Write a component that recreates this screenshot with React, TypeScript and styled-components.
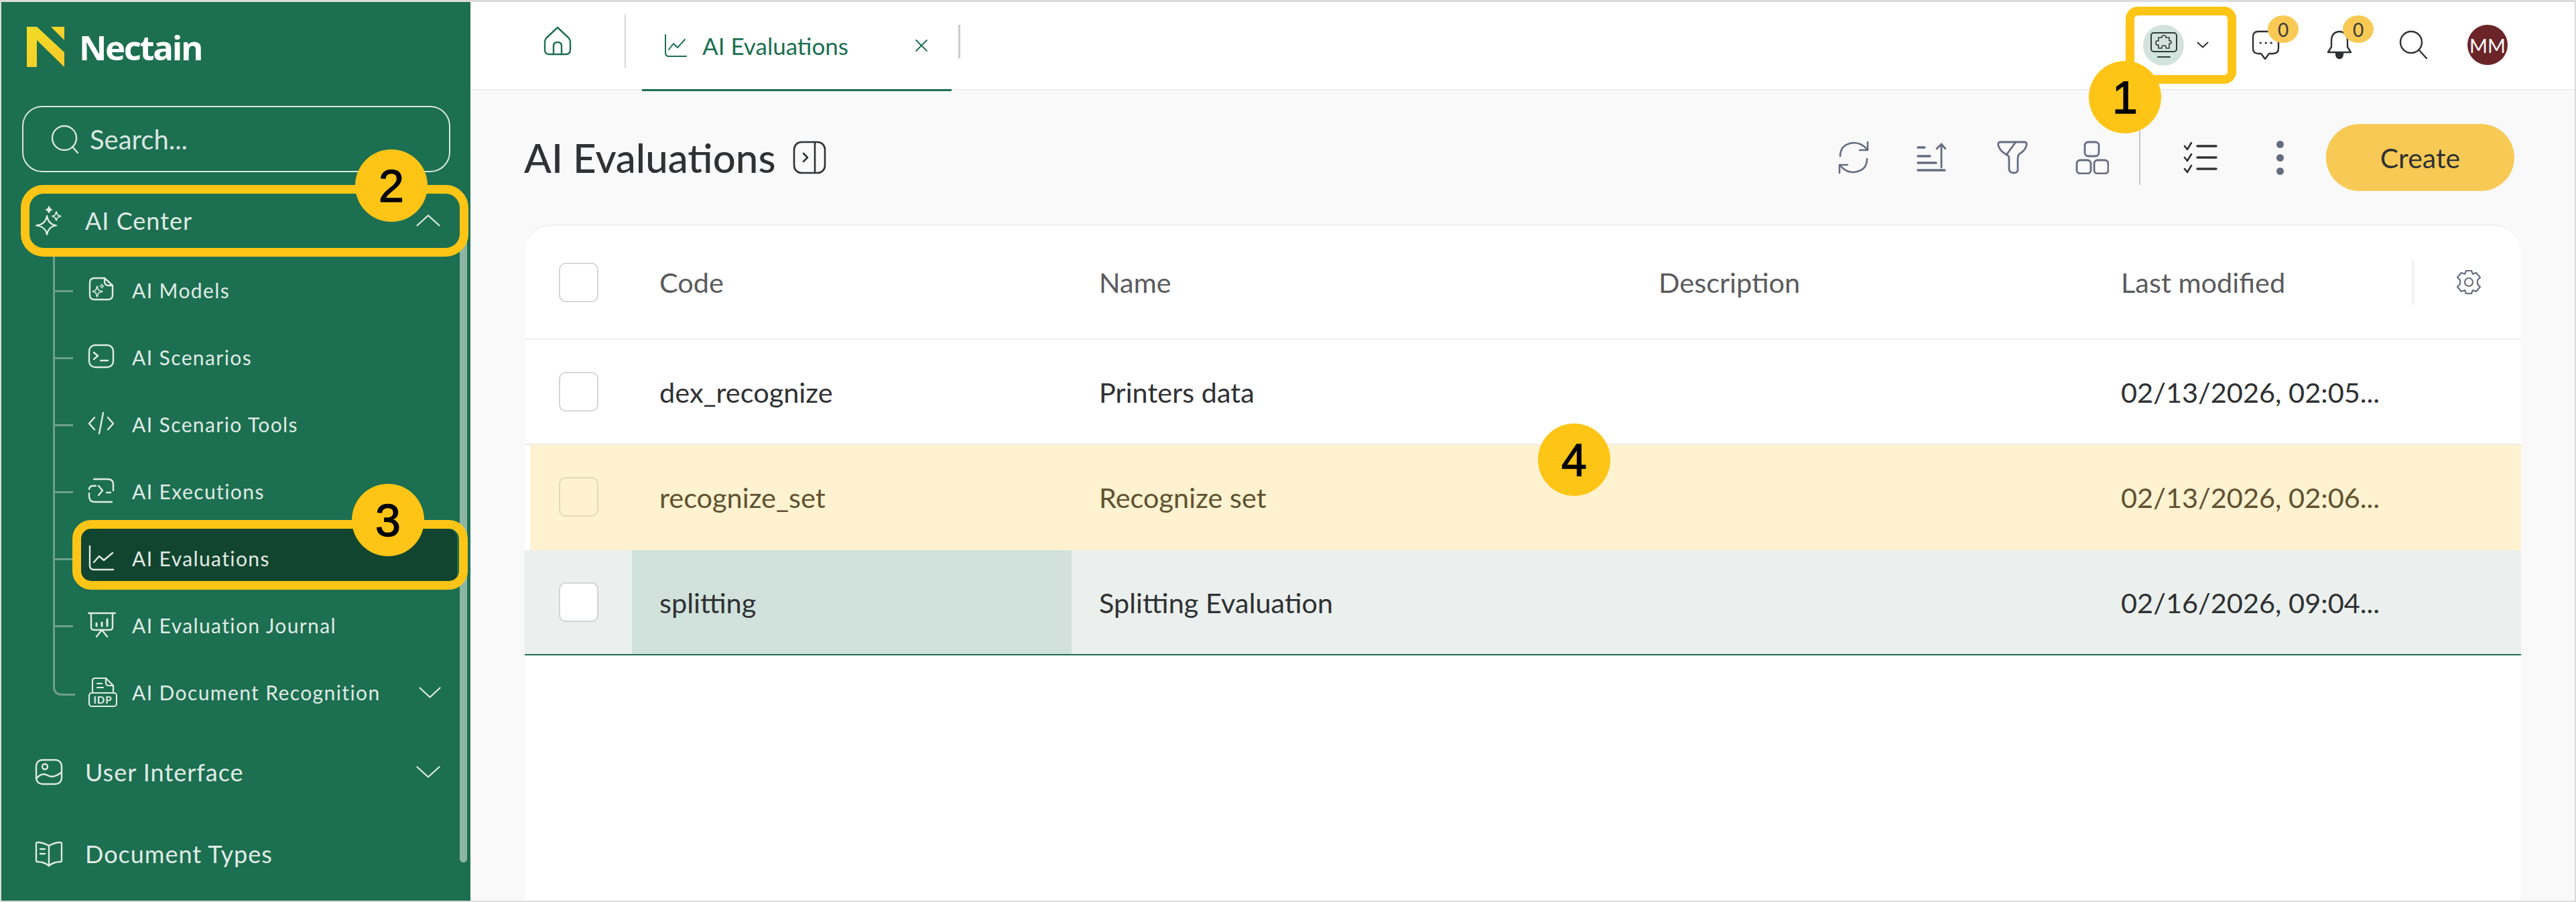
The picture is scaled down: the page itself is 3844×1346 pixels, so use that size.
import React from "react";
import styled, {createGlobalStyle} from "styled-components";

const GlobalStyle = createGlobalStyle`
  html, body {
    margin: 0;
    padding: 0;
    width: 3844px;
    height: 1346px;
    overflow: hidden;
    background: #fff;
    font-family: Lato, "Open Sans", sans-serif;
  }
  * {
    box-sizing: border-box;
  }
`;

const Icon = ({size = 40, w, h, stroke = "currentColor", sw = 2.4, children}: {
  size?: number;
  w?: number;
  h?: number;
  stroke?: string;
  sw?: number;
  children: React.ReactNode;
}) => (
  <svg
    width={w ?? size}
    height={h ?? size}
    viewBox={`0 0 ${w ?? size} ${h ?? size}`}
    fill="none"
    stroke={stroke}
    strokeWidth={sw}
    strokeLinecap="round"
    strokeLinejoin="round"
    style={{display: "block", flex: "none"}}
  >
    {children}
  </svg>
);

const Chevron = ({up, w = 36, h = 18}: {up?: boolean; w?: number; h?: number}) => (
  <Icon w={w} h={h} sw={2.2}>
    {up ? (
      <path d={`M1.5 ${h - 1.5}L${w / 2} 1.5L${w - 1.5} ${h - 1.5}`} />
    ) : (
      <path d={`M1.5 1.5L${w / 2} ${h - 1.5}L${w - 1.5} 1.5`} />
    )}
  </Icon>
);

const subIcons: Record<string, React.ReactNode> = {
  models: (
    <>
      <path d="M10 3H25L37 14V28Q37 35 30 35H10Q3 35 3 28V10Q3 3 10 3Z" />
      <path d="M25 3V8Q25 14 31 14H37" />
      <path d="M14 15L16 21L22 23L16 25L14 31L12 25L7.5 23L12 21Z" strokeWidth="1.6" />
      <path d="M21 12L22 14L24 15L22 16L21 18L20 16L18 15L20 14Z" strokeWidth="1.2" />
    </>
  ),
  scenarios: (
    <>
      <rect x="2" y="3" width="36" height="33" rx="9" />
      <path d="M9 14L15 19L9 24" />
      <path d="M19 26H30" />
    </>
  ),
  tools: (
    <>
      <path d="M10 11L2 20L10 29" />
      <path d="M23 4L17 35" />
      <path d="M30 11L38 20L30 29" />
    </>
  ),
  executions: (
    <>
      <path d="M9 3H30Q38 3 38 11V20" />
      <path d="M2 24V28Q2 37 10 37H36" />
      <path d="M2 18Q2 14 7 13H12" />
      <path d="M34 23H28" />
      <path d="M16 13L22 20L16 27" />
    </>
  ),
  evaluations: (
    <>
      <path d="M3 3V32Q3 38 9 38H38" />
      <path d="M9 27L17 18L24 24L37 13" />
    </>
  ),
  journal: (
    <>
      <path d="M1 3H41" />
      <path d="M5 3V24Q5 28 9 28H33Q37 28 37 24V3" />
      <path d="M13 22V18" strokeWidth="3" />
      <path d="M21 22V17" strokeWidth="3" />
      <path d="M29 22V12" strokeWidth="3" />
      <path d="M21 28L13 38" />
      <path d="M21 28L29 38" />
    </>
  ),
};

const Sparkles = () => (
  <Icon size={44} sw={2.2}>
    <path d="M18 15Q20 28 32 29.5Q20 31 18 43Q16 31 2 29.5Q16 28 18 15Z" />
    <path d="M32 9L34 14L39 15.5L34 17.5L32 22L30 17.5L26 15.5L30 14Z" strokeWidth="1.8" />
    <path d="M21 1L23 4.5L26 6L23 7.5L21 11L19 7.5L16 6L19 4.5Z" fill="currentColor" strokeWidth="1" />
  </Icon>
);

const DocIdp = () => (
  <svg width="44" height="46" viewBox="0 0 44 46" fill="none" stroke="currentColor" strokeWidth="2.2" strokeLinecap="round" strokeLinejoin="round" style={{display: "block", flex: "none"}}>
    <path d="M7 22V6Q7 2 11 2H27L38 13V22" />
    <path d="M27 2V9Q27 13 31 13H38" />
    <path d="M14 10H21M14 16H23" />
    <rect x="2" y="24" width="41" height="20" rx="4" />
    <text x="22.5" y="39.5" textAnchor="middle" fontFamily="Lato, sans-serif" fontSize="15" fontWeight="700" letterSpacing="1" fill="currentColor" stroke="none">IDP</text>
  </svg>
);

const subItems = [
  {key: "models", label: "AI Models"},
  {key: "scenarios", label: "AI Scenarios"},
  {key: "tools", label: "AI Scenario Tools"},
  {key: "executions", label: "AI Executions"},
  {key: "evaluations", label: "AI Evaluations", active: true},
  {key: "journal", label: "AI Evaluation Journal"},
];

const rows = [
  {code: "dex_recognize", name: "Printers data", date: "02/13/2026, 02:05...", tone: "plain"},
  {code: "recognize_set", name: "Recognize set", date: "02/13/2026, 02:06...", tone: "warn"},
  {code: "splitting", name: "Splitting Evaluation", date: "02/16/2026, 09:04...", tone: "selected"},
] as const;

const callouts = [
  {n: "1", x: 3171, y: 145},
  {n: "2", x: 584, y: 277},
  {n: "3", x: 579, y: 776},
  {n: "4", x: 2349, y: 686},
];

const rings = [
  {x: 3172, y: 10, w: 165, h: 115, r: 18},
  {x: 31, y: 276, w: 668, h: 107, r: 34},
  {x: 108, y: 776, w: 590, h: 104, r: 28},
];

const App = () => {
  return (
    <Page>
      <GlobalStyle />
      <Sidebar>
        <Brand>
          <svg width="56" height="60" viewBox="0 0 56 60" style={{display: "block"}}>
            <defs>
              <linearGradient id="nGrad" x1="0" y1="0" x2="1" y2="1">
                <stop offset="0" stopColor="#f3dc27" />
                <stop offset="1" stopColor="#f5c92a" />
              </linearGradient>
            </defs>
            <path d="M0 0H15L56 38V60L15 20V60H0Z" fill="url(#nGrad)" />
            <path d="M36 0H56V20Z" fill="url(#nGrad)" />
          </svg>
          <BrandName>Nectain</BrandName>
        </Brand>
        <SearchBox>
          <Icon size={44} sw={2.4}>
            <circle cx="20" cy="20" r="18" />
            <path d="M32 33L40 42" />
          </Icon>
          <span>Search...</span>
        </SearchBox>
        <TopRow>
          <TopIcon>
            <Sparkles />
          </TopIcon>
          <TopLabel>AI Center</TopLabel>
          <Chevron up />
        </TopRow>
        <SubList>
          {subItems.map((item) => (
            <SubRow key={item.key}>
              <SubItem $active={item.active}>
                <SubIcon>
                  <Icon size={42}>{subIcons[item.key]}</Icon>
                </SubIcon>
                <SubLabel>{item.label}</SubLabel>
              </SubItem>
            </SubRow>
          ))}
          <SubRow $last>
            <SubItem>
              <SubIcon>
                <DocIdp />
              </SubIcon>
              <SubLabel>AI Document Recognition</SubLabel>
              <SubChevron>
                <Chevron w={33} h={17} />
              </SubChevron>
            </SubItem>
          </SubRow>
        </SubList>
        <TopRow $tall>
          <TopIcon>
            <Icon w={42} h={42}>
              <rect x="2" y="3" width="38" height="36" rx="9" />
              <circle cx="15" cy="13" r="4" />
              <path d="M3 30Q11 21 19 26T39 22" />
            </Icon>
          </TopIcon>
          <TopLabel>User Interface</TopLabel>
          <Chevron />
        </TopRow>
        <TopRow $tall>
          <TopIcon>
            <Icon w={42} h={40}>
              <path d="M21 8V38" />
              <path d="M21 8Q12 3 4 3Q2 3 2 5V30Q2 32 4 32Q14 32 21 38Q28 32 38 32Q40 32 40 30V5Q40 3 38 3Q30 3 21 8Z" />
              <path d="M8 13H15M8 20H15" />
            </Icon>
          </TopIcon>
          <TopLabel>Document Types</TopLabel>
        </TopRow>
        <ScrollThumb />
      </Sidebar>

      <Main>
        <TopBar>
          <HomeSlot>
            <Icon w={42} h={44}>
              <path d="M21 2L37 17Q40 20 40 24V35Q40 42 33 42H9Q2 42 2 35V24Q2 20 5 17Z" />
              <path d="M15 42V30Q15 24 21 24Q27 24 27 30V42" />
            </Icon>
          </HomeSlot>
          <Tab>
            <Icon w={34} h={36} sw={2}>
              <path d="M2 2V29Q2 34 7 34H33" />
              <path d="M7 24L14 15L20 21L31 9" />
            </Icon>
            <TabLabel>AI Evaluations</TabLabel>
            <TabClose>
              <Icon size={20} sw={1.8}>
                <path d="M2 2L18 18M18 2L2 18" />
              </Icon>
            </TabClose>
          </Tab>
          <TabEnd />
          <TopActions>
            <WorkspaceBadge>
              <Icon w={42} h={40} stroke="#2f3b38" sw={2}>
                <rect x="2" y="2" width="38" height="28" rx="4" />
                <path d="M12 38H30" />
                <path d="M21 6Q25 6 24 9H29V14Q32 13 32 16Q32 19 29 18V25H24Q25 21 21 21Q17 21 18 25H13V20Q9 21 9 17Q9 13 13 14V9H18Q17 6 21 6Z" strokeWidth="1.6" />
              </Icon>
            </WorkspaceBadge>
            <TinyChevron>
              <Icon w={18} h={10} sw={2}>
                <path d="M1.5 1.5L9 8.5L16.5 1.5" />
              </Icon>
            </TinyChevron>
            <BadgeIcon $gap={64}>
              <Icon w={42} h={44} stroke="#2e3032">
                <path d="M10 2H32Q40 2 40 10V27Q40 35 32 35H26L20 43L14 35H10Q2 35 2 27V10Q2 2 10 2Z" />
                <path d="M13 19H13.4M21 19H21.4M29 19H29.4" strokeWidth="3" />
              </Icon>
              <CountBadge>0</CountBadge>
            </BadgeIcon>
            <BadgeIcon $gap={70}>
              <Icon w={38} h={44} stroke="#2e3032">
                <path d="M19 2Q7 3 7 16V25L2 33H36L31 25V16Q31 3 19 2Z" />
                <path d="M14 34Q14 42 19 42Q24 42 24 34" fill="#2e3032" />
              </Icon>
              <CountBadge>0</CountBadge>
            </BadgeIcon>
            <PlainIcon>
              <Icon size={44} stroke="#2e3032">
                <circle cx="18" cy="18" r="16" />
                <path d="M30 30L41 42" />
              </Icon>
            </PlainIcon>
            <Avatar>MM</Avatar>
          </TopActions>
        </TopBar>

        <PageHead>
          <PageTitle>AI Evaluations</PageTitle>
          <PanelToggle>
            <Icon w={50} h={50} stroke="#2f3133" sw={2.6}>
              <rect x="2" y="2" width="46" height="46" rx="11" />
              <path d="M33 2V48" />
              <path d="M16 19L22 25L16 31" />
            </Icon>
          </PanelToggle>
          <ToolGroup>
            <ToolIcon $gap={0}>
              <Icon size={52} stroke="#666c80" sw={2.6}>
                <path d="M6 24Q6 6 26 4Q38 4 46 14" />
                <path d="M47 3V15H35" />
                <path d="M46 28Q46 46 26 48Q14 48 6 38" />
                <path d="M5 49V37H17" />
              </Icon>
            </ToolIcon>
            <ToolIcon $gap={68}>
              <Icon w={44} h={46} stroke="#666c80" sw={2.8}>
                <path d="M2 8H12M2 21H20M2 31H29M2 42H42" strokeWidth="3.4" />
                <path d="M37 38V3M30 10L37 3L43 10" />
              </Icon>
            </ToolIcon>
            <ToolIcon $gap={76}>
              <Icon w={46} h={50} stroke="#666c80" sw={2.8}>
                <path d="M5 2H41Q45 2 44 7Q42 15 33 20Q31 22 31 26V43Q31 48 25 48Q19 48 18 43V26Q18 22 13 20Q4 15 2 7Q1 2 5 2Z" />
                <path d="M28 2L14 21" />
              </Icon>
            </ToolIcon>
            <ToolIcon $gap={71}>
              <Icon w={50} h={50} stroke="#666c80" sw={2.8}>
                <rect x="14" y="2" width="21" height="21" rx="5" />
                <rect x="2" y="29" width="21" height="20" rx="5" />
                <rect x="28" y="29" width="21" height="20" rx="5" />
              </Icon>
            </ToolIcon>
            <ToolDivider />
            <ToolIcon $gap={0}>
              <Icon w={52} h={50} stroke="#2f3133" sw={2.6}>
                <path d="M3 8L7 13L13 3M3 25L7 30L13 20M3 42L7 47L13 37" />
                <path d="M22 8H50M22 25H50M22 42H50" strokeWidth="3.4" />
              </Icon>
            </ToolIcon>
            <ToolIcon $gap={88}>
              <MoreDots>
                <i />
                <i />
                <i />
              </MoreDots>
            </ToolIcon>
            <CreateButton>Create</CreateButton>
          </ToolGroup>
        </PageHead>

        <TableCard>
          <HeaderRow>
            <CheckCell>
              <Check />
            </CheckCell>
            <HeadCell>Code</HeadCell>
            <HeadCell>Name</HeadCell>
            <HeadCell>Description</HeadCell>
            <HeadCell>Last modified</HeadCell>
            <GearCell>
              <Icon size={40} stroke="#666c80" sw={2.2}>
                <path d="M16 3H24L26 8L31 6L37 13L33 17V23L37 27L31 34L26 32L24 37H16L14 32L9 34L3 27L7 23V17L3 13L9 6L14 8Z" />
                <circle cx="20" cy="20" r="6" />
              </Icon>
            </GearCell>
          </HeaderRow>
          {rows.map((row) => (
            <BodyRow key={row.code} $tone={row.tone}>
              <CheckCell $inset={row.tone === "warn"}>
                <Check $tone={row.tone} />
              </CheckCell>
              <BodyCell $focused={row.tone === "selected"}>{row.code}</BodyCell>
              <BodyCell>{row.name}</BodyCell>
              <BodyCell />
              <BodyCell>{row.date}</BodyCell>
              <BodyCell />
            </BodyRow>
          ))}
        </TableCard>
      </Main>

      {rings.map((r) => (
        <Ring key={r.x} $x={r.x} $y={r.y} $w={r.w} $h={r.h} $r={r.r} />
      ))}
      {callouts.map((c) => (
        <Callout key={c.n} $x={c.x} $y={c.y}>
          {c.n}
        </Callout>
      ))}
    </Page>
  );
};

export default App;

const Page = styled.div`
  position: relative;
  display: flex;
  width: 3844px;
  height: 1346px;
  overflow: hidden;
  border: 2px solid #dcdcdc;
  border-top-width: 3px;
  background: #fff;
`;

const Sidebar = styled.aside`
  position: relative;
  flex: none;
  width: 700px;
  height: 100%;
  background: #1c6f50;
  color: #e0ebe6;
  padding: 0 29px 0 0;
`;

const Brand = styled.div`
  display: flex;
  align-items: center;
  gap: 22px;
  height: 155px;
  padding: 0 0 21px 38px;
`;

const BrandName = styled.span`
  font-family: "Open Sans", Lato, sans-serif;
  font-size: 51px;
  font-weight: 700;
  letter-spacing: -2.4px;
  color: #fff;
`;

const SearchBox = styled.div`
  display: flex;
  align-items: center;
  gap: 14px;
  width: 639px;
  height: 99px;
  margin-left: 31px;
  padding-left: 41px;
  border: 2px solid #d9e6e0;
  border-radius: 30px;
  font-size: 40px;
  color: #d9e6e0;
`;

const TopRow = styled.div<{$tall?: boolean}>`
  display: flex;
  align-items: center;
  height: ${(props) => (props.$tall ? "122px" : "100px")};
  margin-top: ${(props) => (props.$tall ? "0" : "22px")};
  padding: 0 15px 0 50px;
  width: 670px;
`;

const TopIcon = styled.span`
  display: flex;
  width: 75px;
  flex: none;
`;

const TopLabel = styled.span`
  flex: 1;
  font-size: 36px;
  letter-spacing: 1px;
`;

const SubList = styled.div`
  position: relative;
  padding-top: 4px;
  padding-bottom: 8px;

  &::before {
    content: "";
    position: absolute;
    left: 77px;
    top: 0;
    bottom: 74px;
    width: 3px;
    background: #6fa08d;
  }
`;

const SubRow = styled.div<{$last?: boolean}>`
  position: relative;
  height: 100px;
  padding: 6px 0 6px 118px;

  &::before {
    content: "";
    position: absolute;
    left: 77px;
    width: 30px;
    ${(props) =>
      props.$last
        ? `top: 30px; height: 22px; border-left: 3px solid #6fa08d; border-bottom: 3px solid #6fa08d; border-bottom-left-radius: 12px;`
        : `top: 50px; height: 3px; background: #6fa08d;`}
  }
`;

const SubItem = styled.div<{$active?: boolean}>`
  display: flex;
  align-items: center;
  width: 562px;
  height: 88px;
  padding-left: 11px;
  border-radius: 14px;
  background: ${(props) => (props.$active ? "#12452f" : "transparent")};
`;

const SubIcon = styled.span`
  display: flex;
  width: 66px;
  flex: none;
`;

const SubLabel = styled.span`
  flex: 1;
  font-size: 30px;
  letter-spacing: 1.4px;
`;

const SubChevron = styled.span`
  display: flex;
  margin-right: 24px;
`;

const ScrollThumb = styled.div`
  position: absolute;
  left: 684px;
  top: 300px;
  width: 11px;
  height: 984px;
  border-radius: 6px;
  background: #8cb5a5;
`;

const Main = styled.main`
  flex: 1;
  display: flex;
  flex-direction: column;
  min-width: 0;
  background: #f9f9fa;
`;

const TopBar = styled.header`
  flex: none;
  display: flex;
  align-items: center;
  height: 132px;
  background: #fff;
  border-bottom: 2px solid #eeeeee;
`;

const HomeSlot = styled.div`
  display: flex;
  align-items: center;
  width: 232px;
  height: 80px;
  padding-left: 109px;
  border-right: 2px solid #d4d4d4;
  margin-bottom: 14px;
  color: #1c6f50;
`;

const Tab = styled.div`
  position: relative;
  display: flex;
  align-items: center;
  width: 462px;
  height: 132px;
  margin-left: 24px;
  padding: 0 0 0 33px;
  color: #1c6f50;

  &::after {
    content: "";
    position: absolute;
    left: 0;
    right: 0;
    bottom: -2px;
    height: 3px;
    background: #1c6f50;
  }
`;

const TabLabel = styled.span`
  margin-left: 23px;
  font-size: 35px;
`;

const TabClose = styled.span`
  display: flex;
  margin-left: auto;
  margin-right: 35px;
`;

const TabEnd = styled.span`
  width: 3px;
  height: 50px;
  margin: 0 0 12px 10px;
  background: #cccccc;
`;

const TopActions = styled.div`
  display: flex;
  align-items: center;
  margin-left: auto;
  margin-right: 100px;
  height: 100%;
  padding-bottom: 2px;
`;

const WorkspaceBadge = styled.span`
  display: flex;
  align-items: center;
  justify-content: center;
  width: 61px;
  height: 61px;
  border-radius: 50%;
  background: #d2e2dc;
`;

const TinyChevron = styled.span`
  display: flex;
  margin-left: 19px;
  color: #2e3032;
`;

const BadgeIcon = styled.span<{$gap: number}>`
  position: relative;
  display: flex;
  margin-left: ${(props) => props.$gap}px;
`;

const CountBadge = styled.span`
  position: absolute;
  top: -22px;
  left: 24px;
  width: 46px;
  height: 41px;
  display: flex;
  align-items: center;
  justify-content: center;
  border-radius: 50%;
  background: #f8ca55;
  color: #3a3a36;
  font-size: 28px;
`;

const PlainIcon = styled.span`
  display: flex;
  margin-left: 70px;
`;

const Avatar = styled.span`
  display: flex;
  align-items: center;
  justify-content: center;
  width: 60px;
  height: 60px;
  margin-left: 58px;
  border-radius: 50%;
  background: #6b2428;
  color: #fff;
  font-size: 29px;
`;

const PageHead = styled.div`
  flex: none;
  display: flex;
  align-items: center;
  height: 200px;
  padding: 0 90px 0 80px;
`;

const PageTitle = styled.h1`
  margin: 0;
  font-size: 60px;
  font-weight: 500;
  color: #2f3133;
`;

const PanelToggle = styled.span`
  display: flex;
  margin-left: 26px;
`;

const ToolGroup = styled.div`
  display: flex;
  align-items: center;
  margin-left: auto;
`;

const ToolIcon = styled.span<{$gap: number}>`
  display: flex;
  margin-left: ${(props) => props.$gap}px;
`;

const ToolDivider = styled.span`
  width: 2px;
  height: 82px;
  margin: 0 63px 0 45px;
  background: #c8c8c8;
`;

const MoreDots = styled.span`
  display: flex;
  flex-direction: column;
  gap: 9px;

  i {
    display: block;
    width: 11px;
    height: 11px;
    border-radius: 50%;
    background: #666c80;
  }
`;

const CreateButton = styled.button`
  width: 281px;
  height: 100px;
  margin-left: 63px;
  border: none;
  border-radius: 50px;
  background: #f8ca55;
  color: #2f3133;
  font-family: inherit;
  font-size: 41px;
`;

const TableCard = styled.section`
  flex: 1;
  margin: 0 80px 0 81px;
  background: #fff;
  border-top: 2px solid #f0f0f0;
  border-radius: 40px 40px 0 0;
`;

const gridColumns = "160px 656px 835px 690px 476px 1fr";

const HeaderRow = styled.div`
  display: grid;
  grid-template-columns: ${gridColumns};
  align-items: center;
  height: 170px;
  border-bottom: 2px solid #eeeeee;
`;

const rowTones = {
  plain: {bg: "#fff", color: "#2f3133", border: "#f0ece2"},
  warn: {bg: "#fef2d0", color: "#5f5230", border: "#fef2d0"},
  selected: {bg: "#ebf0ee", color: "#2f3133", border: "#1c6f50"},
};

const BodyRow = styled.div<{$tone: keyof typeof rowTones}>`
  display: grid;
  grid-template-columns: ${(props) =>
    props.$tone === "warn" ? "152px 656px 835px 690px 476px 1fr" : gridColumns};
  height: 157px;
  margin-left: ${(props) => (props.$tone === "warn" ? "8px" : "0")};
  background: ${(props) => rowTones[props.$tone].bg};
  color: ${(props) => rowTones[props.$tone].color};
  border-bottom: 2px solid ${(props) => rowTones[props.$tone].border};
`;

const CheckCell = styled.div<{$inset?: boolean}>`
  display: flex;
  align-items: center;
  padding-left: ${(props) => (props.$inset ? "43px" : "51px")};
`;

const checkBorders = {plain: "#d6d6d6", warn: "#e6d8b4", selected: "#d0d6d3"};

const Check = styled.span<{$tone?: keyof typeof checkBorders}>`
  display: block;
  width: 59px;
  height: 59px;
  border: 2px solid ${(props) => checkBorders[props.$tone ?? "plain"]};
  border-radius: 10px;
  background: ${(props) => (props.$tone === "warn" ? "transparent" : "#fff")};
`;

const HeadCell = styled.div`
  padding-left: 41px;
  font-size: 41.5px;
  color: #5a5b5e;
`;

const BodyCell = styled.div<{$focused?: boolean}>`
  display: flex;
  align-items: center;
  padding-left: 41px;
  font-size: 41.5px;
  white-space: nowrap;
  background: ${(props) => (props.$focused ? "#d1e2dc" : "transparent")};
`;

const GearCell = styled.div`
  display: flex;
  align-items: center;
  height: 68px;
  padding-left: 62px;
  border-left: 2px solid #eeeeee;
`;

const Ring = styled.div<{$x: number; $y: number; $w: number; $h: number; $r: number}>`
  position: absolute;
  left: ${(props) => props.$x - 2}px;
  top: ${(props) => props.$y - 3}px;
  width: ${(props) => props.$w}px;
  height: ${(props) => props.$h}px;
  border: 13px solid #fec516;
  border-radius: ${(props) => props.$r}px;
  pointer-events: none;
`;

const Callout = styled.div<{$x: number; $y: number}>`
  position: absolute;
  left: ${(props) => props.$x - 56}px;
  top: ${(props) => props.$y - 57}px;
  width: 108px;
  height: 108px;
  display: flex;
  align-items: center;
  justify-content: center;
  border-radius: 50%;
  background: #fec516;
  color: #000;
  font-family: "Liberation Sans", Arial, sans-serif;
  font-size: 68px;
  -webkit-text-stroke: 1.4px #000;
`;
